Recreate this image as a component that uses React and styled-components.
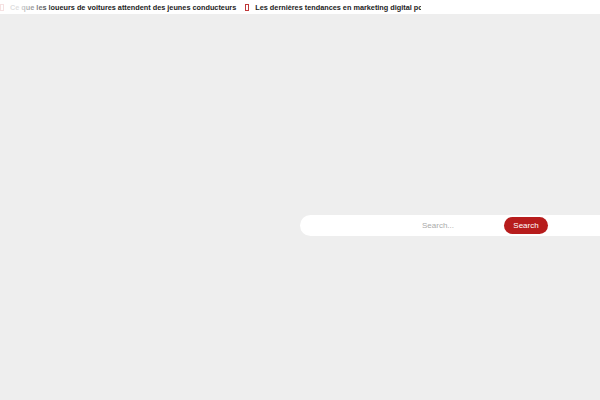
import styled, { createGlobalStyle } from "styled-components";

const GlobalStyle = createGlobalStyle`
  html, body {
    margin: 0;
    padding: 0;
    background: #eeeeee;
    font-family: "Liberation Sans", Arial, sans-serif;
  }
`;

const Page = styled.div`
  width: 600px;
  height: 400px;
  display: flex;
  flex-direction: column;
  background: #eeeeee;
  overflow: hidden;
`;

const TopBar = styled.div`
  height: 14px;
  background: #ffffff;
  display: flex;
  align-items: center;
`;

const Ticker = styled.div`
  position: relative;
  width: 421px;
  height: 100%;
  display: flex;
  align-items: center;
  gap: 9px;
  white-space: nowrap;
  overflow: hidden;
`;

const Fade = styled.div`
  position: absolute;
  left: 0;
  top: 0;
  bottom: 0;
  width: 55px;
  background: linear-gradient(to right, rgba(255,255,255,0.85) 35%, rgba(255,255,255,0));
  pointer-events: none;
`;

const Item = styled.span`
  display: flex;
  align-items: center;
  gap: 6px;
  font-size: 7.3px;
  font-weight: bold;
  color: #222222;
`;

const Glyph = styled.span`
  display: inline-block;
  width: 2px;
  height: 5px;
  border: 1px solid #c0393b;
`;

const Body = styled.div`
  flex: 1;
  display: flex;
  align-items: center;
  justify-content: flex-end;
`;

const SearchForm = styled.form`
  width: 300px;
  height: 21px;
  background: #ffffff;
  border-radius: 11px 0 0 11px;
  display: flex;
  align-items: center;
  padding-right: 52px;
  box-sizing: border-box;
  margin-top: 36px;
`;

const SearchInput = styled.input`
  flex: 1;
  min-width: 0;
  border: none;
  outline: none;
  background: transparent;
  text-align: center;
  font-family: "Liberation Sans", Arial, sans-serif;
  font-size: 8px;
  color: #333;
  padding-left: 74px;
  &::placeholder {
    color: #aaaaaa;
  }
`;

const SearchButton = styled.button`
  width: 44px;
  height: 17px;
  border: none;
  border-radius: 9px;
  background: #b71c1c;
  color: #ffffff;
  font-family: "Liberation Sans", Arial, sans-serif;
  font-size: 8px;
  padding: 0;
`;

export default function App() {
  return (
    <Page>
      <GlobalStyle />
      <TopBar>
        <Ticker>
          <Item>
            <Glyph />
            <span>Ce que les loueurs de voitures attendent des jeunes conducteurs</span>
          </Item>
          <Item>
            <Glyph />
            <span>Les dernières tendances en marketing digital pour 2024</span>
          </Item>
          <Fade />
        </Ticker>
      </TopBar>
      <Body>
        <SearchForm onSubmit={(e) => e.preventDefault()}>
          <SearchInput placeholder="Search..." />
          <SearchButton type="submit">Search</SearchButton>
        </SearchForm>
      </Body>
    </Page>
  );
}
